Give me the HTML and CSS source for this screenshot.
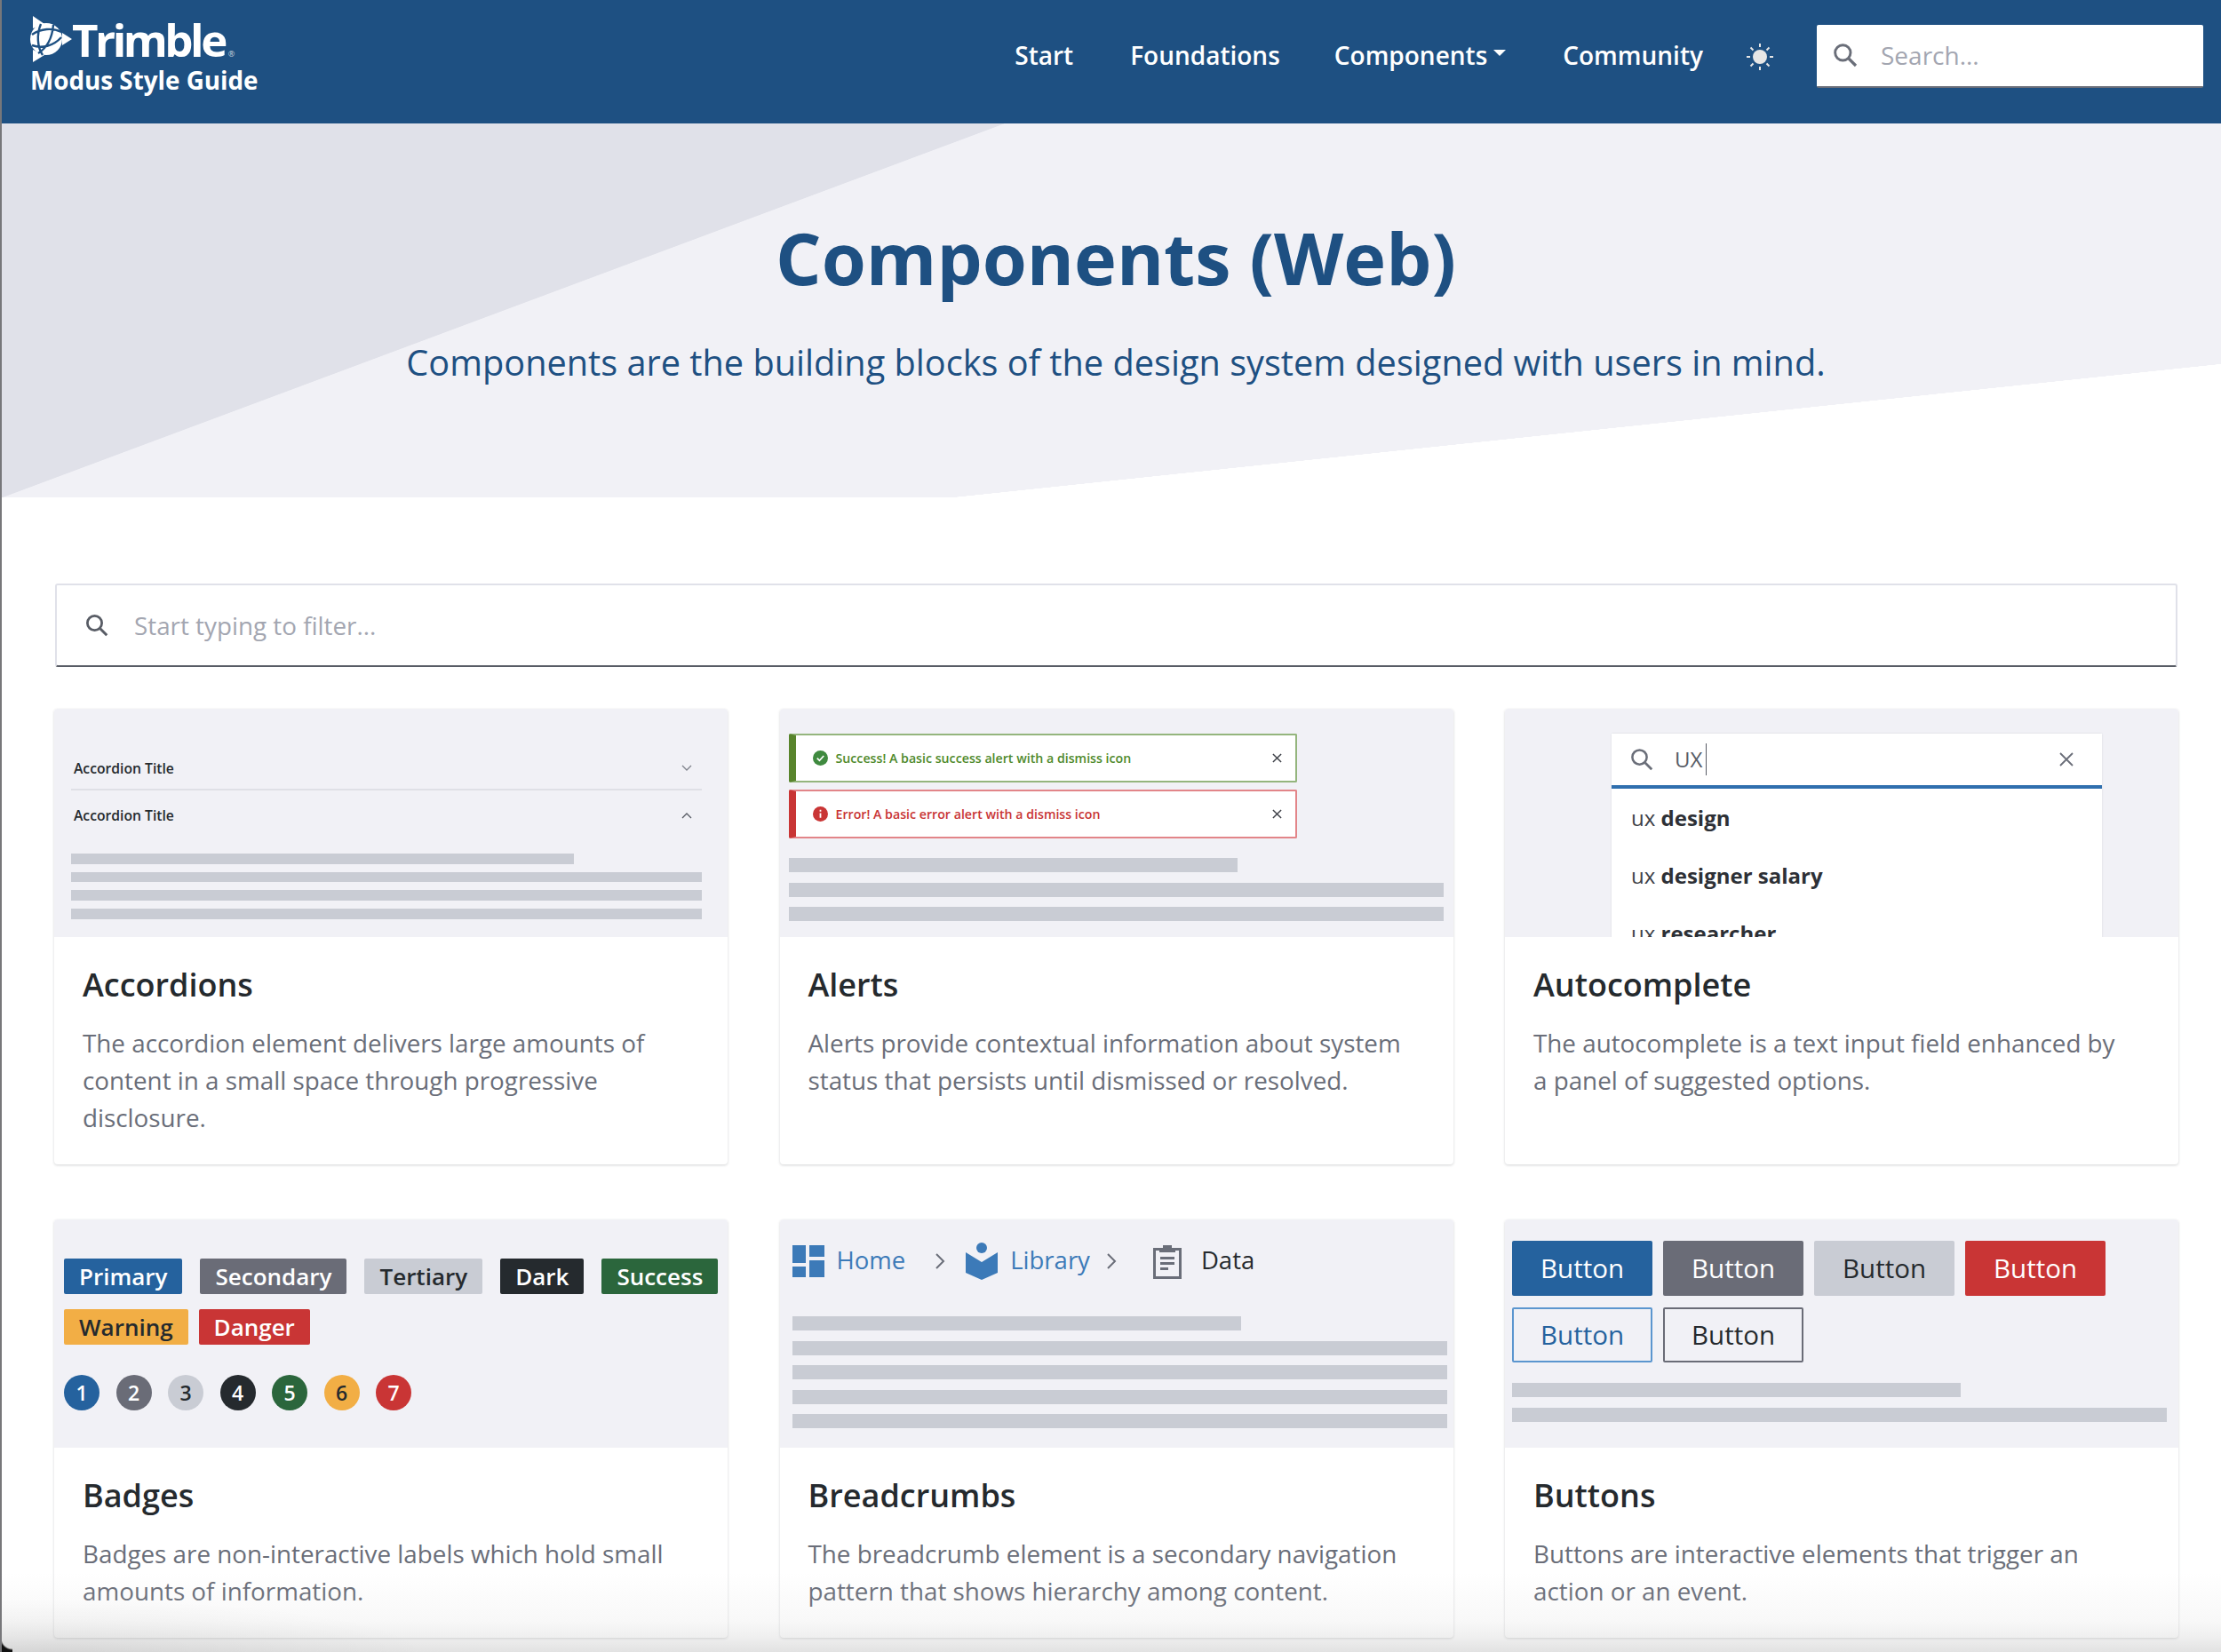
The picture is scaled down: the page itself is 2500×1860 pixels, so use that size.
FILE: index.html
```html
<!DOCTYPE html>
<html lang="en">
  <head>
    <meta charset="UTF-8" />
    <title>Components (Web) - Modus Style Guide</title>
    <link rel="stylesheet" href="styles.css">
  </head>
  <body>
    <!-- top navigation -->
    <nav class="navbar">
      <a class="brand" href="#">
        <span class="brand-top">
          <svg class="brand-mark" viewBox="0 0 48 52" width="48" height="52">
            <path d="M4 0 L17 9 L4 14 Z M48 26 L37 19 L37 33 Z M4 52 L17 44 L4 38 Z" fill="#fff"/>
            <circle cx="19" cy="26" r="18" fill="#fff"/>
            <path d="M3 21 C13 14 26 13 36 18 M3 33 C14 37 27 34 36 24 M13 9 C8 21 9 35 15 44 M27 10 C26 22 21 35 10 42" fill="none" stroke="#1e5082" stroke-width="2.400"/>
          </svg>
          <span class="brand-name">Trimble</span><span class="brand-reg">®</span>
        </span>
        <span class="brand-sub">Modus Style Guide</span>
      </a>
      <div class="nav-links">
        <a class="nav-link" href="#">Start</a>
        <a class="nav-link" href="#">Foundations</a>
        <a class="nav-link nav-drop" href="#">Components</a>
        <a class="nav-link" href="#">Community</a>
      </div>
      <svg class="sun" viewBox="0 0 32 32" width="32" height="32">
        <circle cx="16" cy="16" r="8" fill="#e6e6e6"/>
        <path d="M16 1v4M16 27v4M1 16h4M27 16h4M5.500 5.500l3 3M23.500 23.500l3 3M5.500 26.500l3-3M23.500 8.500l3-3" stroke="#e6e6e6" stroke-width="2"/>
      </svg>
      <div class="nav-search">
        <svg class="icon-search" viewBox="0 0 24 24" width="32" height="32">
          <circle cx="10" cy="10" r="6.500" fill="none" stroke="#6a6e79" stroke-width="2.200"/>
          <path d="M15 15l6 6" stroke="#6a6e79" stroke-width="2.400"/>
        </svg>
        <span class="nav-search-text">Search...</span>
      </div>
    </nav>

    <!-- hero -->
    <header class="hero">
      <h1>Components (Web)</h1>
      <p>Components are the building blocks of the design system designed with users in mind.</p>
    </header>

    <main class="content">
      <div class="filter">
        <svg class="icon-search" viewBox="0 0 24 24" width="30" height="30">
          <circle cx="10" cy="10" r="6.500" fill="none" stroke="#585c65" stroke-width="2.200"/>
          <path d="M15 15l6 6" stroke="#585c65" stroke-width="2.400"/>
        </svg>
        <span class="filter-text">Start typing to filter...</span>
      </div>

      <div class="card-grid">
        <!-- Accordions -->
        <article class="card">
          <div class="preview preview-accordion">
            <div class="acc-row acc-first">
              <span>Accordion Title</span>
              <svg viewBox="0 0 12 8" width="12" height="8"><path d="M1 1l5 5 5-5" fill="none" stroke="#7f838c" stroke-width="1.300"/></svg>
            </div>
            <div class="acc-row">
              <span>Accordion Title</span>
              <svg viewBox="0 0 12 8" width="12" height="8"><path d="M1 7l5-5 5 5" fill="none" stroke="#585c65" stroke-width="1.300"/></svg>
            </div>
            <div class="bars bars-tight">
              <div class="bar bar-short"></div>
              <div class="bar"></div>
              <div class="bar"></div>
              <div class="bar"></div>
            </div>
          </div>
          <div class="card-body">
            <h2>Accordions</h2>
            <p>The accordion element delivers large amounts of content in a small space through progressive disclosure.</p>
          </div>
        </article>

        <!-- Alerts -->
        <article class="card">
          <div class="preview preview-alerts">
            <div class="alert alert-success">
              <svg viewBox="0 0 16 16" width="17" height="17"><circle cx="8" cy="8" r="8" fill="#3f8a3f"/><path d="M4.500 8.200l2.500 2.500 4.500-5" fill="none" stroke="#fff" stroke-width="1.600"/></svg>
              <span class="alert-text">Success! A basic success alert with a dismiss icon</span>
              <svg class="alert-close" viewBox="0 0 12 12" width="11" height="11"><path d="M1 1l10 10M11 1L1 11" stroke="#3e4148" stroke-width="1.600"/></svg>
            </div>
            <div class="alert alert-error">
              <svg viewBox="0 0 16 16" width="17" height="17"><circle cx="8" cy="8" r="8" fill="#c93535"/><path d="M8 7v5M8 3.500v1.800" stroke="#fff" stroke-width="1.700"/></svg>
              <span class="alert-text">Error! A basic error alert with a dismiss icon</span>
              <svg class="alert-close" viewBox="0 0 12 12" width="11" height="11"><path d="M1 1l10 10M11 1L1 11" stroke="#3e4148" stroke-width="1.600"/></svg>
            </div>
            <div class="bars bars-wide">
              <div class="bar bar-short"></div>
              <div class="bar"></div>
              <div class="bar"></div>
            </div>
          </div>
          <div class="card-body">
            <h2>Alerts</h2>
            <p>Alerts provide contextual information about system status that persists until dismissed or resolved.</p>
          </div>
        </article>

        <!-- Autocomplete -->
        <article class="card">
          <div class="preview preview-auto">
            <div class="auto-box">
              <div class="auto-input">
                <svg viewBox="0 0 24 24" width="30" height="30">
                  <circle cx="10" cy="10" r="6.500" fill="none" stroke="#6a6e79" stroke-width="2"/>
                  <path d="M15 15l6 6" stroke="#6a6e79" stroke-width="2.200"/>
                </svg>
                <span class="auto-value">UX</span>
                <svg class="auto-clear" viewBox="0 0 16 16" width="16" height="16"><path d="M1 1l14 14M15 1L1 15" stroke="#6a6e79" stroke-width="1.800"/></svg>
              </div>
              <div class="auto-item">ux <b>design</b></div>
              <div class="auto-item">ux <b>designer salary</b></div>
              <div class="auto-item">ux <b>researcher</b></div>
            </div>
          </div>
          <div class="card-body">
            <h2>Autocomplete</h2>
            <p>The autocomplete is a text input field enhanced by a panel of suggested options.</p>
          </div>
        </article>

        <!-- Badges -->
        <article class="card">
          <div class="preview preview-badges">
            <div class="badge-row">
              <span class="badge primary">Primary</span>
              <span class="badge secondary">Secondary</span>
              <span class="badge tertiary">Tertiary</span>
              <span class="badge dark">Dark</span>
              <span class="badge success">Success</span>
            </div>
            <div class="badge-row badge-row-tight">
              <span class="badge warning">Warning</span>
              <span class="badge danger">Danger</span>
            </div>
            <div class="counter-row">
              <span class="counter primary">1</span>
              <span class="counter secondary">2</span>
              <span class="counter tertiary">3</span>
              <span class="counter dark">4</span>
              <span class="counter success">5</span>
              <span class="counter warning">6</span>
              <span class="counter danger">7</span>
            </div>
          </div>
          <div class="card-body">
            <h2>Badges</h2>
            <p>Badges are non-interactive labels which hold small amounts of information.</p>
          </div>
        </article>

        <!-- Breadcrumbs -->
        <article class="card">
          <div class="preview preview-crumbs">
            <div class="crumbs">
              <svg class="crumb-icon" viewBox="0 0 36 36" width="36" height="36"><path d="M0 0h15v20H0zM19 0h17v13H19zM19 17h17v19H19zM0 24h15v12H0z" fill="#3c7ab8"/></svg>
              <a class="crumb crumb-home" href="#">Home</a>
              <svg class="crumb-sep sep-one" viewBox="0 0 12 20" width="12" height="20"><path d="M2 2l8 8-8 8" fill="none" stroke="#6a6e79" stroke-width="2"/></svg>
              <svg class="crumb-icon" viewBox="0 0 36 42" width="36" height="42"><circle cx="18" cy="6" r="6" fill="#3c7ab8"/><path d="M0 11l18 11 18-11v23l-18 8-18-8z" fill="#3c7ab8"/></svg>
              <a class="crumb crumb-library" href="#">Library</a>
              <svg class="crumb-sep sep-two" viewBox="0 0 12 20" width="12" height="20"><path d="M2 2l8 8-8 8" fill="none" stroke="#6a6e79" stroke-width="2"/></svg>
              <svg class="crumb-icon" viewBox="0 0 32 40" width="32" height="40"><path d="M1.500 6.500h29v32h-29z" fill="none" stroke="#6a6e79" stroke-width="3"/><path d="M11 2h10v3h4v5H7V5h4zM8 15h16v3H8zM8 21h16v3H8zM8 27h9v3H8z" fill="#6a6e79"/></svg>
              <span class="crumb-current">Data</span>
            </div>
            <div class="bars bars-crumbs">
              <div class="bar bar-short"></div>
              <div class="bar"></div>
              <div class="bar"></div>
              <div class="bar"></div>
              <div class="bar"></div>
            </div>
          </div>
          <div class="card-body">
            <h2>Breadcrumbs</h2>
            <p>The breadcrumb element is a secondary navigation pattern that shows hierarchy among content.</p>
          </div>
        </article>

        <!-- Buttons -->
        <article class="card">
          <div class="preview preview-buttons">
            <div class="btn-row">
              <span class="btn primary">Button</span>
              <span class="btn secondary">Button</span>
              <span class="btn tertiary">Button</span>
              <span class="btn danger">Button</span>
            </div>
            <div class="btn-row">
              <span class="btn btn-outline-primary">Button</span>
              <span class="btn btn-outline-dark">Button</span>
            </div>
            <div class="bars bars-buttons">
              <div class="bar bar-short"></div>
              <div class="bar"></div>
            </div>
          </div>
          <div class="card-body">
            <h2>Buttons</h2>
            <p>Buttons are interactive elements that trigger an action or an event.</p>
          </div>
        </article>
      </div>
    </main>

    <div class="bottom-fade"></div>
    <div class="window-corner"></div>
  </body>
</html>
```

FILE: styles.css
```css
/* page */
html,
body {
  height: 1860px;
  overflow: hidden;
}

body {
  position: relative;
  margin: 0;
  border-left: 2px solid #77777a;
  background-color: #fff;
  font-family: "Open Sans", "Noto Sans", sans-serif;
  color: #252a2e;
}

a {
  text-decoration: none;
}

/* navbar */
.navbar {
  display: flex;
  align-items: center;
  height: 139px;
  padding: 0 20px 16px 31px;
  box-sizing: border-box;
  background-color: #1e5082;
}

.brand {
  display: flex;
  flex-direction: column;
  align-self: flex-start;
  margin: 18px auto 0 0;
  color: #fff;
}

.brand-top {
  display: flex;
  align-items: center;
  height: 52px;
}

.brand-mark {
  flex: none;
}

.brand-name {
  font-size: 51px;
  font-weight: 700;
  letter-spacing: -3.500px;
  line-height: 52px;
}

.brand-reg {
  align-self: flex-end;
  margin: 0 0 4px 4px;
  font-size: 9px;
  line-height: 10px;
  color: #c9d3de;
}

.brand-sub {
  margin: 3px 0 0 1px;
  font-size: 27.800px;
  font-weight: 700;
  line-height: 34px;
}

.nav-links {
  display: flex;
  gap: 64px;
  margin-right: 48px;
}

.nav-link {
  color: #fff;
  font-size: 28px;
  font-weight: 600;
  line-height: 40px;
}

.nav-drop {
  display: flex;
  align-items: center;
  gap: 7px;
  margin-left: -3px;
}

.nav-drop::after {
  content: "";
  border-top: 7px solid #fff;
  border-left: 7px solid transparent;
  border-right: 7px solid transparent;
  margin-bottom: 4px;
}

.sun {
  flex: none;
  margin: 4px 48px 0 0;
}

.nav-search {
  display: flex;
  align-items: center;
  gap: 24px;
  box-sizing: border-box;
  width: 435px;
  height: 71px;
  margin-top: 3px;
  padding: 0 16px;
  background-color: #fff;
  border-bottom: 2px solid #6a6e79;
  border-radius: 2px;
}

.nav-search-text {
  font-size: 28px;
  color: #a3a6b1;
}

/* hero */
.hero {
  box-sizing: border-box;
  height: 421px;
  padding: 92px 0 0 10px;
  text-align: center;
  color: #1e5082;
  background-color: #f1f1f6;
  background-image:
    linear-gradient(to bottom right, #e0e1e9 50%, transparent 50.1%),
    linear-gradient(to bottom right, transparent 49.9%, #fff 50%);
  background-size: 1128px 421px, 1425px 150px;
  background-position: left top, right bottom;
  background-repeat: no-repeat;
}

.hero h1 {
  margin: 0;
  font-size: 81px;
  font-weight: 700;
  line-height: 118px;
}

.hero p {
  margin: 29px 0 0;
  font-size: 39.700px;
  line-height: 60px;
}

/* filter */
.content {
  padding: 97px 49px 0 60px;
}

.filter {
  display: flex;
  align-items: center;
  gap: 27px;
  box-sizing: border-box;
  height: 94px;
  padding: 0 30px;
  background-color: #fff;
  border: 2px solid #e0e1e9;
  border-bottom: 2px solid #585c65;
  border-radius: 3px;
}

.filter-text {
  font-size: 27.800px;
  color: #a3a6b1;
}

/* cards */
.card-grid {
  display: grid;
  grid-template-columns: repeat(3, 758px);
  column-gap: 58.500px;
  row-gap: 62px;
  margin: 47px 0 0 -1px;
}

.card {
  display: flex;
  flex-direction: column;
  height: 513px;
  background-color: #fff;
  border-radius: 4px;
  box-shadow: 0 1px 3px rgba(37, 42, 46, 0.2);
  overflow: hidden;
}

.card:nth-child(n + 4) {
  height: 471px;
}

.preview {
  flex: none;
  box-sizing: border-box;
  height: 257px;
  background-color: #f1f1f6;
  overflow: hidden;
}

.card-body {
  padding: 29px 53px 28px 32px;
}

.card-body h2 {
  margin: 0;
  font-size: 36px;
  font-weight: 600;
  line-height: 50px;
  color: #252a2e;
}

.card-body p {
  margin: 20px 0 0;
  font-size: 27.800px;
  line-height: 41.800px;
  color: #6a6e79;
}

/* placeholder text lines */
.bar {
  height: 16px;
  margin-bottom: 11.500px;
  background-color: #c9ccd4;
}

.bar-short {
  width: 505px;
}

.bars-tight .bar {
  height: 11.500px;
  margin-bottom: 9.200px;
}

.bars-tight .bar-short {
  width: 566px;
}

/* accordion preview */
.preview-accordion {
  padding: 49px 29px 0 19px;
}

.acc-row {
  display: flex;
  align-items: center;
  justify-content: space-between;
  height: 35px;
  padding: 0 11px 0 3px;
  font-size: 15.700px;
  font-weight: 600;
}

.acc-first {
  margin-bottom: 10px;
  padding-bottom: 6px;
  border-bottom: 2px solid #dfe0e6;
}

.bars-tight {
  margin-top: 26px;
}

/* alert preview */
.preview-alerts {
  padding: 28px 11px 0 10px;
}

.alert {
  display: flex;
  align-items: center;
  box-sizing: border-box;
  width: 572px;
  height: 55px;
  margin-bottom: 8px;
  padding: 0 15px 0 19px;
  background-color: #fff;
  border: 2px solid;
  border-left-width: 8px;
  border-radius: 2px;
  font-size: 14.200px;
  font-weight: 600;
}

.alert svg {
  flex: none;
}

.alert-text {
  margin-left: 9px;
}

.alert svg.alert-close {
  margin-left: auto;
}

.alert-success {
  border-color: #94b57d;
  border-left-color: #58842c;
  color: #4f8a2c;
}

.alert-error {
  border-color: #e28589;
  border-left-color: #c93535;
  color: #c93535;
}

.bars-wide {
  margin-top: 22px;
}

/* autocomplete preview */
.preview-auto {
  padding: 28px 0 0 120px;
}

.auto-box {
  width: 552px;
  background-color: #fff;
  box-shadow: 0 0 2px rgba(37, 42, 46, 0.12);
}

.auto-input {
  display: flex;
  align-items: center;
  box-sizing: border-box;
  height: 62px;
  padding: 0 32px 0 19px;
  border-bottom: 4px solid #2f6fae;
}

.auto-value {
  margin-left: 22px;
  padding-right: 4px;
  font-size: 24px;
  line-height: 36px;
  color: #585c65;
  border-right: 1.500px solid #585c65;
}

.auto-clear {
  margin-left: auto;
}

.auto-item {
  height: 65px;
  padding: 0 22px;
  font-size: 24px;
  line-height: 65px;
  color: #3e4148;
}

.auto-item b {
  font-weight: 700;
  color: #2d3036;
}

/* badge preview */
.preview-badges {
  padding: 44px 0 0 11px;
}

.badge-row {
  display: flex;
  gap: 20px;
  margin-bottom: 17px;
}

.badge-row-tight {
  gap: 12px;
}

.badge {
  box-sizing: border-box;
  height: 40px;
  padding: 0 17px;
  border-radius: 2px;
  font-size: 26px;
  font-weight: 600;
  line-height: 40px;
}

.counter-row {
  display: flex;
  gap: 18.500px;
  margin-top: 34px;
}

.counter {
  width: 40px;
  height: 40px;
  border-radius: 50%;
  text-align: center;
  font-size: 23px;
  font-weight: 600;
  line-height: 40px;
}

.primary {
  background-color: #25629e;
  color: #fff;
}

.secondary {
  background-color: #6a6c77;
  color: #fff;
}

.tertiary {
  background-color: #c9ccd4;
  color: #252a2e;
}

.dark {
  background-color: #252a2e;
  color: #fff;
}

.success {
  background-color: #2b663c;
  color: #fff;
}

.warning {
  background-color: #f2ae45;
  color: #252a2e;
}

.danger {
  background-color: #c93535;
  color: #fff;
}

/* breadcrumb preview */
.preview-crumbs {
  padding: 25px 7px 0 14px;
}

.crumbs {
  display: flex;
  align-items: center;
  height: 44px;
  font-size: 27.500px;
}

.crumb-icon {
  flex: none;
}

.crumb {
  margin-bottom: 4px;
  color: #3c7ab8;
}

.crumb-home {
  margin-left: 14px;
}

.crumb-library {
  margin-left: 14px;
}

.sep-one {
  margin: 0 23px 0 33px;
}

.sep-two {
  margin: 0 41px 0 18px;
}

.crumb-current {
  margin: 0 0 4px 22px;
  color: #252a2e;
}

.bars-crumbs {
  margin-top: 40px;
}

/* button preview */
.preview-buttons {
  padding: 24px 13px 0 8px;
}

.btn-row {
  display: flex;
  gap: 12px;
  margin-bottom: 13px;
}

.btn {
  box-sizing: border-box;
  width: 158px;
  height: 62px;
  border-radius: 2px;
  text-align: center;
  font-size: 29.500px;
  line-height: 62px;
}

.btn-outline-primary {
  border: 2px solid #5b96cf;
  color: #25629e;
  line-height: 58px;
}

.btn-outline-dark {
  border: 2px solid #6a6c77;
  color: #252a2e;
  line-height: 58px;
}

.bars-buttons {
  margin-top: 23px;
}

/* soft fade along the lower edge */
.bottom-fade {
  position: absolute;
  left: 0;
  right: 0;
  bottom: 0;
  height: 90px;
  background:
    radial-gradient(ellipse 420px 60px at 60px 100%, rgba(0, 0, 0, 0.06), rgba(0, 0, 0, 0)),
    linear-gradient(to bottom, rgba(200, 200, 200, 0), rgba(200, 200, 200, 0.12) 60%, rgba(200, 200, 200, 0.27) 80%, rgba(200, 200, 200, 0.53));
}

.window-corner {
  position: absolute;
  left: -2px;
  bottom: 0;
  width: 14px;
  height: 16px;
  background: radial-gradient(circle at 100% 0, rgba(0, 0, 0, 0) 12px, #111 14px);
}
```
